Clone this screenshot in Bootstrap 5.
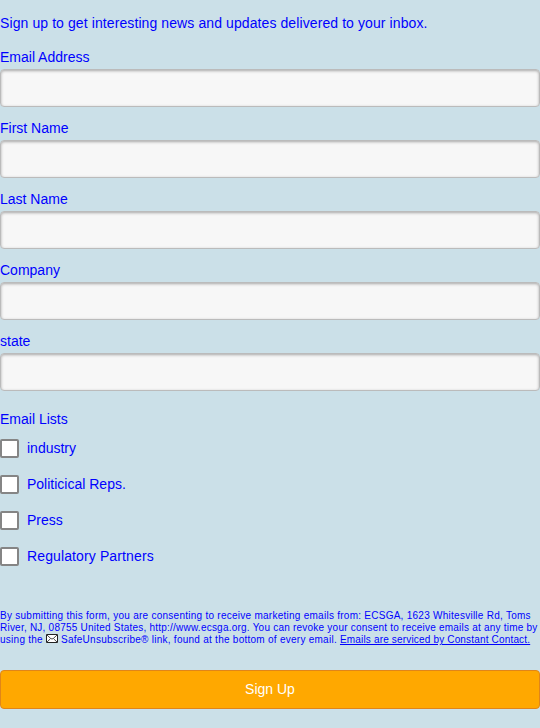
<!DOCTYPE html>
<html lang="en">
<head>
<meta charset="utf-8">
<title>Sign Up</title>
<link href="https://cdn.jsdelivr.net/npm/bootstrap@5.3.0/dist/css/bootstrap.min.css" rel="stylesheet">
<style>
body{background:#cbe0e8;color:#00f;font:14px/20px "Liberation Sans",Arial,sans-serif;overflow:hidden}
.intro{padding-top:13px;margin-bottom:14px;letter-spacing:.095px}
.field{margin-bottom:11px}
.field .form-label{display:block;margin:0 0 2px;line-height:20px}
.field .form-control{height:38px;border:1px solid #bbb;border-radius:4px;background:#f7f7f7;box-shadow:inset 0 1px 3px rgba(0,0,0,.32);padding:8px}
.lists{padding-top:7px}
.lists legend{font-size:14px;line-height:20px;margin:0 0 9px}
.choice{margin-bottom:16px;height:20px}
.choice .form-check-input{width:19px;height:19px;margin:1px 0 0;border:2px solid #858585;border-radius:2px;background:#fff}
.wider{letter-spacing:.12px}
.legal{font-size:10px;line-height:12px;margin:28px 0 24px;letter-spacing:.26px;white-space:nowrap}
.legal span{letter-spacing:.225px}
.legal a{color:#00f;letter-spacing:.17px}
.legal svg{vertical-align:0}
.send,.send:hover{height:39px;background:#ffa800;border:1px solid #e08519;border-radius:4px;color:#fff;font-size:14px;line-height:20px;padding:8px 12px 9px}
</style>
</head>
<body>
<form>
<p class="intro">Sign up to get interesting news and updates delivered to your inbox.</p>
<div class="field"><label class="form-label" for="email">Email Address</label><input class="form-control" id="email"></div>
<div class="field"><label class="form-label" for="first">First Name</label><input class="form-control" id="first"></div>
<div class="field"><label class="form-label" for="last">Last Name</label><input class="form-control" id="last"></div>
<div class="field"><label class="form-label" for="company">Company</label><input class="form-control" id="company"></div>
<div class="field"><label class="form-label" for="state">state</label><input class="form-control" id="state"></div>
<fieldset class="lists">
<legend>Email Lists</legend>
<div class="choice d-flex gap-2"><input class="form-check-input" type="checkbox" id="l1"><label for="l1">industry</label></div>
<div class="choice d-flex gap-2"><input class="form-check-input" type="checkbox" id="l2"><label for="l2">Politicical Reps.</label></div>
<div class="choice d-flex gap-2"><input class="form-check-input" type="checkbox" id="l3"><label for="l3">Press</label></div>
<div class="choice d-flex gap-2"><input class="form-check-input" type="checkbox" id="l4"><label class="wider" for="l4">Regulatory Partners</label></div>
</fieldset>
<p class="legal">By submitting this form, you are consenting to receive marketing emails from: ECSGA, 1623 Whitesville Rd, Toms<br><span>River, NJ, 08755 United States, http://www.ecsga.org. You can revoke your consent to receive emails at any time by</span><br>using the <svg width="12" height="9" viewBox="0 0 12 9"><path d="M.5.5h11v8H.5z" fill="#fff" stroke="#222"/><path d="M1 1l4 3.800h2L11 1M1 8l3.200-3M11 8 7.800 5" fill="none" stroke="#333" stroke-width=".9"/></svg> SafeUnsubscribe® link, found at the bottom of every email. <a href="#">Emails are serviced by Constant Contact.</a></p>
<button class="btn send w-100" type="button">Sign Up</button>
</form>
<script src="https://cdn.jsdelivr.net/npm/bootstrap@5.3.0/dist/js/bootstrap.bundle.min.js"></script>
</body>
</html>
